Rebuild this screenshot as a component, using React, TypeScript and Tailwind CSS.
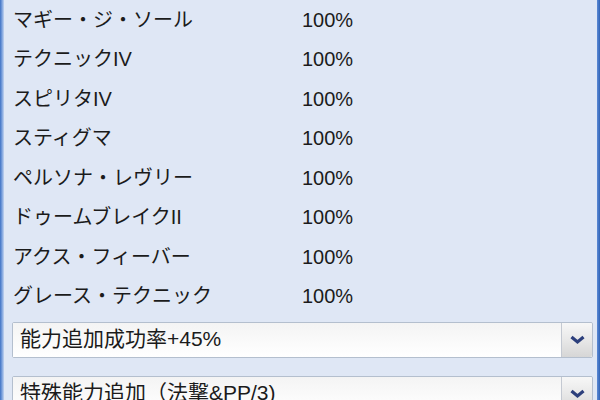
import React from 'react';

const ROWS = [
  'マギー・ジ・ソール',
  'テクニックIV',
  'スピリタIV',
  'スティグマ',
  'ペルソナ・レヴリー',
  'ドゥームブレイクII',
  'アクス・フィーバー',
  'グレース・テクニック',
];

const FONT = { fontFamily: '"Liberation Sans", "Noto Sans CJK JP", sans-serif' };

function Chevron() {
  return (
    <svg width="15" height="10" viewBox="0 0 15 10">
      <path d="M1.5 2 L7.5 7 L13.5 2" fill="none" stroke="#2c3f7c" strokeWidth="3.2" />
    </svg>
  );
}

function Select({ label }: { label: string }) {
  return (
    <div className="flex h-[36px] shrink-0 rounded-[2px] border border-[#b4bfce] bg-white">
      <div className="flex flex-1 items-center pb-[3px] pl-[7px] text-[21px] leading-none text-[#1b1b1b] bg-gradient-to-b from-[#f4f4f4] to-white">
        {label}
      </div>
      <div className="flex w-[31px] items-center justify-center rounded-r-[2px] border-l border-[#c4c9d2] bg-gradient-to-b from-[#f7f7f7] via-[#e8e8e8] to-[#d6d6d6]">
        <Chevron />
      </div>
    </div>
  );
}

export default function App() {
  return (
    <div className="flex h-[400px] w-[600px] overflow-hidden bg-[#dfe7f5]" style={FONT}>
      <div className="w-[4px] shrink-0 bg-gradient-to-r from-[#3f72c4] via-[#7aa0dc] to-[#c5d5ef]" />
      <div className="flex flex-1 flex-col pl-[8px] pr-[4px]">
        <div className="flex flex-col">
          {ROWS.map((name) => (
            <div key={name} className="flex h-[39.5px] shrink-0 items-center text-[20px] text-[#1b1b1b]">
              <span className="w-[290px] pl-[1px]">{name}</span>
              <span>100%</span>
            </div>
          ))}
        </div>
        <div className="mt-[6px] flex flex-col gap-[18px]">
          <Select label="能力追加成功率+45%" />
          <Select label="特殊能力追加（法撃&PP/3)" />
        </div>
      </div>
      <div className="w-[3px] shrink-0 bg-gradient-to-r from-[#5d8bd6] to-[#2f62b5]" />
    </div>
  );
}
